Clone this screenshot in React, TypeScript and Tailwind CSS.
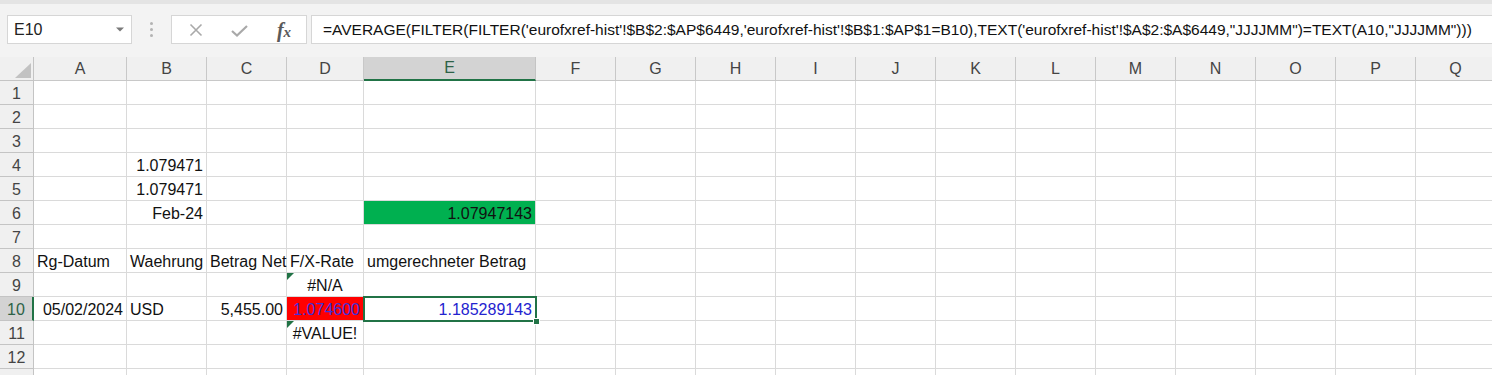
import React from "react";

type Cell = {
  t: string;
  a?: "l" | "r" | "c";
  bg?: string;
  color?: string;
  tri?: boolean;
  sel?: boolean;
};

const COLS = ["A", "B", "C", "D", "E", "F", "G", "H", "I", "J", "K", "L", "M", "N", "O", "P", "Q"];

const data: Record<number, Record<string, Cell>> = {
  4: { B: { t: "1.079471", a: "r" } },
  5: { B: { t: "1.079471", a: "r" } },
  6: {
    B: { t: "Feb-24", a: "r" },
    E: { t: "1.07947143", a: "r", bg: "green" },
  },
  8: {
    A: { t: "Rg-Datum" },
    B: { t: "Waehrung" },
    C: { t: "Betrag Net" },
    D: { t: "F/X-Rate" },
    E: { t: "umgerechneter Betrag" },
  },
  9: { D: { t: "#N/A", a: "c", tri: true } },
  10: {
    A: { t: "05/02/2024", a: "r" },
    B: { t: "USD" },
    C: { t: "5,455.00", a: "r" },
    D: { t: "1.074600", a: "r", bg: "red", color: "purple" },
    E: { t: "1.185289143", a: "r", color: "blue", sel: true },
  },
  11: { D: { t: "#VALUE!", a: "c", tri: true } },
};

const FORMULA =
  "=AVERAGE(FILTER(FILTER('eurofxref-hist'!$B$2:$AP$6449,'eurofxref-hist'!$B$1:$AP$1=B10),TEXT('eurofxref-hist'!$A$2:$A$6449,\"JJJJMM\")=TEXT(A10,\"JJJJMM\")))";

const gridCols =
  "grid grid-cols-[34px_93px_80px_80px_77px_172px_80px_80px_80px_80px_80px_80px_80px_80px_80px_80px_80px_80px]";

function CellView({ c }: { c?: Cell }) {
  const align =
    c?.a === "r" ? "justify-end" : c?.a === "c" ? "justify-center" : "justify-start";
  const bg =
    c?.bg === "green" ? "bg-[#00b050]" : c?.bg === "red" ? "bg-[#ff0000]" : "bg-white";
  const color =
    c?.color === "blue"
      ? "text-[#2323cf]"
      : c?.color === "purple"
      ? "text-[#4030d8]"
      : "text-[#111111]";
  return (
    <div
      className={`relative h-[24px] border-r border-b border-[#dadada] whitespace-nowrap px-[3px] flex items-end pb-[1px] text-[16px] leading-[18px] ${align} ${bg} ${color}`}
    >
      {c && <span className="shrink-0">{c.t}</span>}
      {c?.tri && (
        <div className="absolute left-0 top-0 w-0 h-0 border-t-[7px] border-t-[#217346] border-r-[7px] border-r-transparent" />
      )}
      {c?.sel && (
        <div className="absolute left-[-1px] top-[-1px] right-[-2px] bottom-[-2px] border-2 border-[#217346] z-10">
          <div className="absolute right-[-5px] bottom-[-5px] w-[7px] h-[7px] bg-[#217346] border border-white" />
        </div>
      )}
    </div>
  );
}

export default function App() {
  const rows = Array.from({ length: 13 }, (_, i) => i + 1);
  return (
    <div className="w-[1492px] h-[375px] overflow-hidden bg-white font-['Liberation_Sans',Arial,sans-serif]">
      {/* top strip */}
      <div className="h-[4px] bg-[#e4e4e4]" />
      {/* toolbar */}
      <div className="h-[53px] bg-[#f3f3f3] flex items-start pt-[11px] pl-[7px]">
        <div className="w-[125px] h-[29px] bg-white border border-[#d6d6d6] flex items-center pl-[6px] pr-[7px] justify-between">
          <span className="text-[16px] text-[#222] leading-none">E10</span>
          <svg width="8" height="5" viewBox="0 0 8 5">
            <path d="M0 0.5 L8 0.5 L4 4.5 Z" fill="#7a7a7a" />
          </svg>
        </div>
        <div className="w-[39px] h-[29px] flex flex-col items-center justify-center gap-[3px]">
          <div className="w-[3px] h-[3px] rounded-full bg-[#b3b3b3]" />
          <div className="w-[3px] h-[3px] rounded-full bg-[#b3b3b3]" />
          <div className="w-[3px] h-[3px] rounded-full bg-[#b3b3b3]" />
        </div>
        <div className="w-[136px] h-[29px] bg-white border border-[#d6d6d6] flex items-center">
          <div className="w-[44px] flex justify-center pl-[4px]">
            <svg width="14" height="14" viewBox="0 0 14 14">
              <path d="M1.5 1.5 L12.5 12.5 M12.5 1.5 L1.5 12.5" stroke="#a9a9a9" strokeWidth="1.6" />
            </svg>
          </div>
          <div className="w-[46px] flex justify-center pt-[2px]">
            <svg width="17" height="12" viewBox="0 0 17 12">
              <path d="M1 6 L6 10.5 L16 1" stroke="#a9a9a9" strokeWidth="2.2" fill="none" />
            </svg>
          </div>
          <div className="w-[44px] flex justify-center">
            <span className="font-['Liberation_Serif',serif] italic text-[20px] leading-none text-[#5a5a5a] font-bold">
              f<span className="text-[15px]">x</span>
            </span>
          </div>
        </div>
        <div className="ml-[4px] flex-1 h-[29px] bg-white border border-[#d6d6d6] border-r-0 flex items-center pl-[11px]">
          <span className="text-[15.5px] text-[#111] whitespace-nowrap leading-none">{FORMULA}</span>
        </div>
      </div>
      {/* column header row */}
      <div className={gridCols}>
        <div className="relative h-[24px] bg-[#f0f0f0] border-r border-b border-[#c4c4c4]">
          <svg className="absolute left-[15px] top-[6px]" width="16" height="15" viewBox="0 0 16 15">
            <path d="M16 0 L16 15 L0 15 Z" fill="#c2c2c2" />
          </svg>
        </div>
        {COLS.map((c) =>
          c === "E" ? (
            <div
              key={c}
              className="h-[24px] bg-[#d3d3d3] border-r border-r-[#c4c4c4] border-b-2 border-b-[#217346] flex items-center justify-center text-[16px] text-[#2d6247]"
            >
              {c}
            </div>
          ) : (
            <div
              key={c}
              className="h-[24px] bg-[#f0f0f0] border-r border-b border-[#c8c8c8] flex items-center justify-center text-[16px] text-[#444]"
            >
              {c}
            </div>
          )
        )}
      </div>
      {rows.map((r) => (
        <div key={r} className={gridCols}>
          {r === 10 ? (
            <div className="h-[24px] bg-[#d3d3d3] border-r-2 border-r-[#217346] border-b border-b-[#c4c4c4] flex items-end pb-[1px] leading-[18px] justify-center text-[16px] text-[#2d6247]">
              {r}
            </div>
          ) : (
            <div className="h-[24px] bg-[#f0f0f0] border-r border-b border-[#c4c4c4] flex items-end pb-[1px] leading-[18px] justify-center text-[16px] text-[#444]">
              {r < 13 ? r : ""}
            </div>
          )}
          {COLS.map((c) => (
            <CellView key={c} c={data[r]?.[c]} />
          ))}
        </div>
      ))}
    </div>
  );
}
